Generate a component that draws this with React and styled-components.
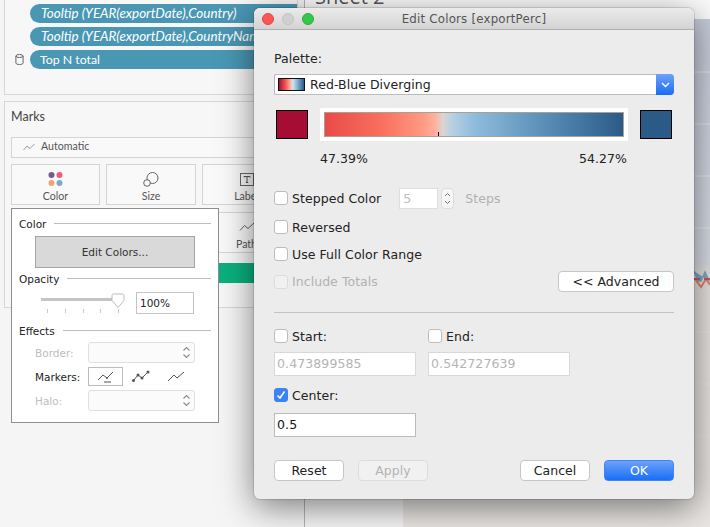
import React from "react";
import styled, { createGlobalStyle } from "styled-components";

const Global = createGlobalStyle`
  html, body { margin: 0; padding: 0; width: 710px; height: 527px; overflow: hidden; background: #f5f5f5; }
  * { box-sizing: border-box; }
`;
const dialogFont = `"DejaVu Sans", "Liberation Sans", sans-serif`;
const sideFont = `Lato, "Open Sans", "Liberation Sans", sans-serif`;

const Page = styled.div`
  position: relative; width: 710px; height: 527px; overflow: hidden; display: flex; font-family: ${sideFont};
`;
const Sidebar = styled.aside`
  width: 305px; height: 527px; flex: none; padding: 0 6px 0 4px; background: #f5f5f5; border-right: 1px solid #b5b5b5;
  display: flex; flex-direction: column; gap: 6px;
`;
const ShelfPanel = styled.section`
  height: 95px; border: 1px solid #d6d6d6; border-top: 0; padding-top: 4px; display: flex; flex-direction: column; gap: 4px; background: #f7f7f7;
`;
const PillRow = styled.div`display: flex; align-items: center; height: 19px; padding-left: 7px; gap: 4px;`;
const DbSlot = styled.span`width: 14px; flex: none; display: flex; justify-content: center;`;
const Pill = styled.div`
  flex: 1; min-width: 0; height: 19.5px; border-radius: 10px 0 0 10px; background: #4a97b4; color: #fff; white-space: nowrap; overflow: hidden;
  font-size: ${p => (p.$italic ? 13.4 : 12.3)}px; line-height: 19px; padding-left: ${p => (p.$italic ? 11 : 10)}px; font-style: ${p => (p.$italic ? "italic" : "normal")};
`;
const MarksPanel = styled.section`
  height: 207px; border: 1px solid #d6d6d6; padding: 6px 6px 0 6px; background: #f7f7f7;
`;
const MarksTitle = styled.div`font-size: 12.5px; line-height: 18px; color: #444;`;
const MarkType = styled.div`
  height: 21px; margin-top: 11px; border: 1px solid #d4d4d4; background: #f9f9f9; display: flex; align-items: center; padding-left: 11px; gap: 6px; font-size: 10.6px; line-height: 17px; padding-bottom: 2px; color: #555;
`;
const CardGrid = styled.div`display: grid; grid-template-columns: 89px 90px 89px; grid-auto-rows: 41px; gap: 7px 6px; margin-top: 6px;`;
const Card = styled.div`
  border: 1px solid #d4d4d4; background: #f9f9f9; display: flex; flex-direction: column; align-items: center; padding-top: 6px; gap: 2px; font-size: 10.6px; line-height: 15px; color: #555;
`;
const IconBox = styled.div`height: 16px; display: flex; align-items: center; justify-content: center;`;
const GreenBar = styled.div`height: 20px; margin-top: 10px; background: #0bb07f;`;

const SheetArea = styled.main`flex: 1; min-width: 0; display: flex; flex-direction: column; background: #fbfbfb;`;
const SheetTitle = styled.h1`
  margin: -15px 0 0 10px; height: 34px; font-size: 20px; line-height: 24px; font-weight: 400; color: #555; font-family: "Open Sans", sans-serif;
`;
const SheetBody = styled.div`flex: 1; display: flex;`;
const AxisGutter = styled.div`width: 98px; flex: none; background: #f6f6f6;`;
const Chart = styled.div`
  flex: 1; position: relative;
  background: linear-gradient(#c6ccda 0%, #d8dce5 48%, #e6e2df 50%, #e9e6e3 100%);
`;
const ChartSvg = styled.svg`position: absolute; left: 0; top: 0; display: block;`;

const Popover = styled.div`
  position: absolute; left: 11px; top: 208px; width: 208px; height: 215px; background: #fff; border: 1px solid #8e8e8e; padding: 7px 7px 0 7px; z-index: 3;
  font-family: ${dialogFont}; color: #222; font-size: 10.5px;
`;
const SectionHead = styled.div`
  display: flex; align-items: center; gap: 8px; height: 16px; font-size: 10.5px; color: #222;
  &::after { content: ""; flex: 1; height: 1px; background: #bdbdbd; margin-top: -1px; }
`;
const EditButton = styled.div`
  width: 160px; height: 32px; margin: 4px 0 3px 16px; background: #d9d9d9; border: 1px solid #a5a5a5; display: flex; align-items: center; justify-content: center; font-size: 10.5px; color: #333;
`;
const OpacityRow = styled.div`display: flex; height: 23px; margin-top: 5px; padding-left: 22px;`;
const Slider = styled.div`position: relative; width: 82px; height: 23px; margin-right: 13px;`;
const SliderTrack = styled.div`position: absolute; left: 0; top: 6px; width: 76px; height: 3px; background: #c4c4c4;`;
const Ticks = styled.div`position: absolute; left: 6px; top: 17px; width: 72px; display: flex; justify-content: space-between;`;
const Tick = styled.i`display: block; width: 1px; height: 4px; background: #c9c9c9;`;
const SliderThumb = styled.svg`position: absolute; left: 70px; top: 1px;`;
const PercentInput = styled.div`
  width: 58px; height: 22px; border: 1px solid #c4c4c4; background: #fff; font-size: 10.5px; line-height: 20px; padding-left: 3px; color: #222;
`;
const EffectsBlock = styled.div`margin-top: 8px;`;
const EffectGrid = styled.div`
  display: grid; grid-template-columns: 53px 107px; grid-auto-rows: 21px; row-gap: 3px; margin: 3px 0 0 16px; align-items: center; font-size: 10.5px;
`;
const EffectLabel = styled.span`color: ${p => (p.$off ? "#bdbdbd" : "#222")};`;
const FakeSelect = styled.div`
  height: 21px; border: 1px solid #e0e0e0; border-radius: 3px; background: #fbfbfb; display: flex; justify-content: flex-end; align-items: center; padding-right: 3px;
`;
const MarkerGroup = styled.div`display: flex; height: 19px;`;
const MarkerBtn = styled.div`
  width: 35px; height: 19px; display: flex; align-items: center; justify-content: center; border: 1px solid ${p => (p.$on ? "#bdbdbd" : "transparent")};
`;

const Dialog = styled.div`
  position: absolute; left: 254px; top: 8px; width: 440px; height: 491px; z-index: 4; background: #ececec; border-radius: 6px; overflow: hidden;
  box-shadow: 0 0 0 1px rgba(0,0,0,.12), 0 8px 34px rgba(0,0,0,.5);
  font-family: ${dialogFont}; color: #222; font-size: 12.5px; letter-spacing: .05px;
`;
const TitleBar = styled.header`
  height: 22px; background: linear-gradient(#ebebeb, #d3d3d3); border-bottom: 1px solid #b0b0b0; display: flex; align-items: center; padding-left: 8px; position: relative;
`;
const Lights = styled.div`display: flex; gap: 8px;`;
const Light = styled.span`
  width: 12px; height: 12px; border-radius: 50%; background: ${p => p.$c}; border: 1px solid ${p => p.$b};
`;
const TitleText = styled.div`
  position: absolute; left: 0; right: 0; top: 0; bottom: 0; text-align: center; line-height: 22px; font-size: 11.8px; color: #555; letter-spacing: .2px;
`;
const DialogBody = styled.div`padding: 20px 20px 0 20px;`;
const FieldLabel = styled.div`line-height: 16px; height: 16px; padding-top: 1px;`;
const PaletteSelect = styled.div`
  height: 21px; margin-top: 8px; display: flex; align-items: center; background: #fff; border: 1px solid #bcbcbc; border-right: 0; border-radius: 2px 4px 4px 2px; padding-left: 3px; gap: 5px;
`;
const PaletteChip = styled.span`
  width: 27px; height: 13px; border: 1px solid #111; background: linear-gradient(90deg, #a50f35, #ef5350 25%, #ffb199 45%, #d5e3ec 55%, #8fbcdc 70%, #2c5a87);
`;
const SelectArrow = styled.span`
  margin-left: auto; width: 18px; height: 21px; background: linear-gradient(#6ea1f8, #1a6cf5); border-radius: 0 4px 4px 0; display: flex; align-items: center; justify-content: center;
`;
const RampRow = styled.div`display: flex; align-items: flex-start; margin-top: 13px;`;
const Swatch = styled.div`width: 32px; height: 29px; margin: 2px 0 0 2px; border: 1px solid #000; background: ${p => p.$c}; flex: none;`;
const RampFrame = styled.div`width: 308px; height: 33px; flex: none; margin: 0 10px 0 12px; background: #fff; padding: 4px; position: relative;`;
const Ramp = styled.div`
  height: 25px; border: 1px solid #a8a294; position: relative;
  background: linear-gradient(90deg, #ea4a48 0%, #f9725f 20%, #ff9a84 33%, #ffb19d 37%, #dcd5d2 39.5%, #b4cfe2 43%, #90bcdd 50%, #6c9fc4 65%, #4a7eaa 82%, #2c5a87 100%);
`;
const RampTick = styled.i`position: absolute; left: 113px; bottom: 0; width: 1px; height: 4px; background: #111;`;
const RangeLabels = styled.div`display: flex; justify-content: space-between; width: 307px; margin: 10px 0 0 46px; line-height: 16px;`;
const CheckRow = styled.div`
  display: flex; align-items: center; height: 16px; margin-top: ${p => p.$mt || 0}px; color: ${p => (p.$off ? "#b2b2b2" : "#222")};
`;
const Box = styled.span`
  width: 14px; height: 14px; flex: none; margin-right: 4px; border-radius: 3px; display: flex; align-items: center; justify-content: center;
  background: ${p => (p.$on ? "#3b82f6" : p.$off ? "#f1f1f1" : "#fff")};
  border: 1px solid ${p => (p.$on ? "#3b82f6" : p.$off ? "#dcdcdc" : "#bcbcbc")};
`;
const StepInput = styled.span`
  width: 39px; height: 21px; margin-left: 18px; border: 1px solid #dedede; background: #fff; color: #bdbdbd; line-height: 19px; padding-left: 3px; flex: none;
`;
const Stepper = styled.span`
  width: 13px; height: 21px; margin: 0 11px 0 3px; border: 1px solid #dcdcdc; border-radius: 4px; background: #f6f6f6; display: flex; align-items: center; justify-content: center; flex: none;
`;
const Muted = styled.span`color: #b0b0b0;`;
const AdvancedRow = styled.div`display: flex; align-items: center; justify-content: space-between; margin-top: 9px; height: 21px;`;
const MacButton = styled.div`
  width: ${p => p.$w || 70}px; height: 21px; border-radius: 4px; display: flex; align-items: center; justify-content: center; flex: none;
  background: ${p => (p.$primary ? "linear-gradient(#6ca2f9, #1a6ef7)" : p.$off ? "#f1f1f1" : "#fff")};
  color: ${p => (p.$primary ? "#fff" : p.$off ? "#b4b4b4" : "#222")};
  border: 1px solid ${p => (p.$primary ? "#3d85f7" : p.$off ? "#dcdcdc" : "#c6c6c6")};
`;
const Rule = styled.hr`height: 1px; border: 0; margin: 20px 0 0 0; background: #c4c4c4;`;
const RangeGrid = styled.div`display: grid; grid-template-columns: 142px 142px; column-gap: 12px; margin-top: 15px;`;
const RangeCell = styled.div`display: flex; flex-direction: column; gap: 8px;`;
const TextField = styled.div`
  width: 142px; height: 24px; border: 1px solid ${p => (p.$off ? "#d8d8d8" : "#bcbcbc")}; background: #fff; padding-left: 2px; line-height: 22px; color: ${p => (p.$off ? "#b4b4b4" : "#111")}; letter-spacing: .1px;
`;
const CenterBlock = styled.div`display: flex; flex-direction: column; gap: 10px; margin-top: 11px;`;
const Footer = styled.footer`display: flex; margin-top: 23px;`;
const FooterLeft = styled.div`display: flex; gap: 14px;`;
const FooterRight = styled.div`display: flex; gap: 14px; margin-left: auto;`;

const Updown = () => (
  <svg width="9" height="15" viewBox="0 0 9 15"><path d="M1.5 5.5 4.5 2.5 7.5 5.5M1.5 9.5 4.5 12.5 7.5 9.5" fill="none" stroke="#8a8a8a" strokeWidth="1.1" /></svg>
);
const TinyUpdown = () => (
  <svg width="7" height="13" viewBox="0 0 7 13"><path d="M1 4 3.5 1.5 6 4M1 9 3.5 11.5 6 9" fill="none" stroke="#777" strokeWidth="1" /></svg>
);
const Wiggle = ({ color = "#888" }) => (
  <svg width="12" height="8" viewBox="0 0 12 8"><path d="M.5 7 4 3 7 5.500 11.500 1" fill="none" stroke={color} strokeWidth="1" /></svg>
);

export default function App() {
  return (
    <Page>
      <Global />
      <Sidebar>
        <ShelfPanel>
          <PillRow><DbSlot /><Pill $italic>Tooltip (YEAR(exportDate),Country)</Pill></PillRow>
          <PillRow><DbSlot /><Pill $italic>Tooltip (YEAR(exportDate),CountryName)</Pill></PillRow>
          <PillRow>
            <DbSlot>
              <svg width="9" height="11" viewBox="0 0 9 11"><ellipse cx="4.5" cy="2" rx="3.6" ry="1.5" fill="none" stroke="#666" /><path d="M.9 2v7c0 .9 1.6 1.5 3.6 1.5S8.100 9.900 8.100 9V2" fill="none" stroke="#666" /></svg>
            </DbSlot>
            <Pill>Top N total</Pill>
          </PillRow>
        </ShelfPanel>
        <MarksPanel>
          <MarksTitle>Marks</MarksTitle>
          <MarkType><Wiggle color="#999" />Automatic</MarkType>
          <CardGrid>
            <Card>
              <IconBox>
                <svg width="16" height="15" viewBox="0 0 16 15">
                  <circle cx="3.500" cy="3" r="3" fill="#76598c" /><circle cx="11.500" cy="3" r="3" fill="#ef5b78" />
                  <circle cx="3.500" cy="11" r="3" fill="#f2a36c" /><circle cx="11.500" cy="11" r="3" fill="#7ea6cf" />
                </svg>
              </IconBox>
              Color
            </Card>
            <Card>
              <IconBox>
                <svg width="16" height="15" viewBox="0 0 16 15">
                  <circle cx="9.500" cy="6" r="5.500" fill="none" stroke="#666" /><circle cx="4" cy="11" r="3.300" fill="#f9f9f9" stroke="#666" />
                </svg>
              </IconBox>
              Size
            </Card>
            <Card>
              <IconBox>
                <svg width="14" height="13" viewBox="0 0 14 13">
                  <rect x=".5" y=".5" width="13" height="12" fill="none" stroke="#666" /><path d="M4 3.500h6M7 3.500v6M5.800 9.500h2.400M4 3.500v1M10 3.500v1" fill="none" stroke="#555" />
                </svg>
              </IconBox>
              Label
            </Card>
            <Card />
            <Card />
            <Card>
              <IconBox>
                <svg width="16" height="10" viewBox="0 0 16 10"><path d="M1 8.500 5.500 3.500 9 6.500 15 1" fill="none" stroke="#666" /></svg>
              </IconBox>
              Path
            </Card>
          </CardGrid>
          <GreenBar />
        </MarksPanel>
      </Sidebar>
      <SheetArea>
        <SheetTitle>Sheet 2</SheetTitle>
        <SheetBody>
          <AxisGutter />
          <Chart>
            <ChartSvg width="307" height="508" viewBox="0 0 307 508">
              {[53, 105, 157, 209, 313, 365, 417].map(y => (
                <line key={y} x1="0" x2="307" y1={y} y2={y} stroke="#e9e9ec" strokeWidth="1" />
              ))}
              <path d="M291 252 295 262 298 262 302 253 306 262" fill="#7fa6c8" stroke="#7fa6c8" strokeWidth="1.500" />
              <path d="M292 260 298 268 303 260 307 266" fill="none" stroke="#e08270" strokeWidth="2" />
              <line x1="291" x2="297" y1="260" y2="260" stroke="#c65a5c" strokeWidth="2" />
              <line x1="301" x2="307" y1="260" y2="260" stroke="#c65a5c" strokeWidth="2" />
            </ChartSvg>
          </Chart>
        </SheetBody>
      </SheetArea>

      <Popover>
        <SectionHead>Color</SectionHead>
        <EditButton>Edit Colors...</EditButton>
        <SectionHead>Opacity</SectionHead>
        <OpacityRow>
          <Slider>
            <SliderTrack />
            <Ticks><Tick /><Tick /><Tick /><Tick /><Tick /></Ticks>
            <SliderThumb width="14" height="16" viewBox="0 0 14 16">
              <path d="M1 2.500a1.500 1.500 0 0 1 1.500-1.500h9a1.500 1.500 0 0 1 1.500 1.500v5L7 14.500 1 7.500z" fill="#fff" stroke="#bdbdbd" />
            </SliderThumb>
          </Slider>
          <PercentInput>100%</PercentInput>
        </OpacityRow>
        <EffectsBlock>
          <SectionHead>Effects</SectionHead>
          <EffectGrid>
            <EffectLabel $off>Border:</EffectLabel>
            <FakeSelect><Updown /></FakeSelect>
            <EffectLabel>Markers:</EffectLabel>
            <MarkerGroup>
              <MarkerBtn $on>
                <svg width="18" height="13" viewBox="0 0 18 13"><path d="M1 10 6 5 10 8 16 2" fill="none" stroke="#555" /><path d="M7 12H14" stroke="#555" /><circle cx="10" cy="8" r="1" fill="#555" /></svg>
              </MarkerBtn>
              <MarkerBtn>
                <svg width="18" height="13" viewBox="0 0 18 13"><path d="M1 11 6 5 10 8 16 2" fill="none" stroke="#555" /><circle cx="1.500" cy="10.500" r="1.500" fill="#555" /><circle cx="6" cy="5" r="1.500" fill="#555" /><circle cx="10" cy="8" r="1.500" fill="#555" /><circle cx="16" cy="2" r="1.500" fill="#555" /></svg>
              </MarkerBtn>
              <MarkerBtn>
                <svg width="18" height="13" viewBox="0 0 18 13"><path d="M1 11 7 5 10 8 17 2" fill="none" stroke="#555" /></svg>
              </MarkerBtn>
            </MarkerGroup>
            <EffectLabel $off>Halo:</EffectLabel>
            <FakeSelect><Updown /></FakeSelect>
          </EffectGrid>
        </EffectsBlock>
      </Popover>

      <Dialog>
        <TitleBar>
          <TitleText>Edit Colors [exportPerc]</TitleText>
          <Lights>
            <Light $c="#fc5753" $b="#e0443e" />
            <Light $c="#d0d0d0" $b="#c2c2c2" />
            <Light $c="#34c84a" $b="#2aad3c" />
          </Lights>
        </TitleBar>
        <DialogBody>
          <FieldLabel>Palette:</FieldLabel>
          <PaletteSelect>
            <PaletteChip />
            Red-Blue Diverging
            <SelectArrow>
              <svg width="9" height="6" viewBox="0 0 9 6"><path d="M1 1 4.500 4.500 8 1" fill="none" stroke="#fff" strokeWidth="1.400" /></svg>
            </SelectArrow>
          </PaletteSelect>
          <RampRow>
            <Swatch $c="#a50d35" />
            <RampFrame><Ramp><RampTick /></Ramp></RampFrame>
            <Swatch $c="#2c5a87" />
          </RampRow>
          <RangeLabels><span>47.39%</span><span>54.27%</span></RangeLabels>
          <CheckRow $mt={23}>
            <Box />Stepped Color
            <StepInput>5</StepInput>
            <Stepper><TinyUpdown /></Stepper>
            <Muted>Steps</Muted>
          </CheckRow>
          <CheckRow $mt={13}><Box />Reversed</CheckRow>
          <CheckRow $mt={11}><Box />Use Full Color Range</CheckRow>
          <AdvancedRow>
            <CheckRow $off><Box $off />Include Totals</CheckRow>
            <MacButton $w={116}>&lt;&lt; Advanced</MacButton>
          </AdvancedRow>
          <Rule />
          <RangeGrid>
            <RangeCell>
              <CheckRow><Box />Start:</CheckRow>
              <TextField $off>0.473899585</TextField>
            </RangeCell>
            <RangeCell>
              <CheckRow><Box />End:</CheckRow>
              <TextField $off>0.542727639</TextField>
            </RangeCell>
          </RangeGrid>
          <CenterBlock>
            <CheckRow>
              <Box $on>
                <svg width="10" height="10" viewBox="0 0 10 10"><path d="M1.500 5.500 4 8 8.500 1.500" fill="none" stroke="#fff" strokeWidth="1.500" /></svg>
              </Box>
              Center:
            </CheckRow>
            <TextField>0.5</TextField>
          </CenterBlock>
          <Footer>
            <FooterLeft>
              <MacButton>Reset</MacButton>
              <MacButton $off>Apply</MacButton>
            </FooterLeft>
            <FooterRight>
              <MacButton>Cancel</MacButton>
              <MacButton $primary>OK</MacButton>
            </FooterRight>
          </Footer>
        </DialogBody>
      </Dialog>
    </Page>
  );
}
